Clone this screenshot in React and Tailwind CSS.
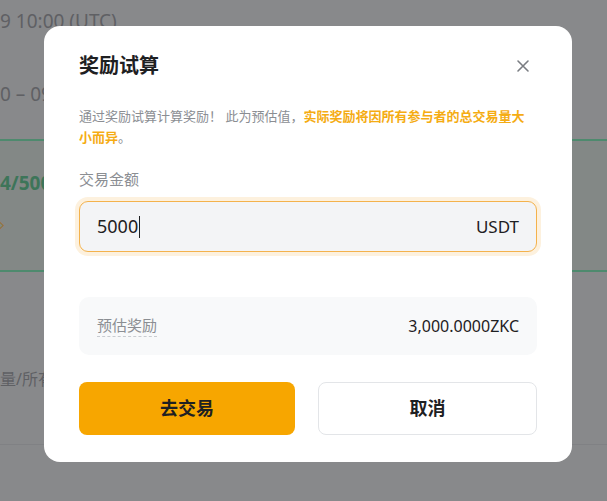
export default function App() {
  return (
    <div
      className="relative w-[607px] h-[501px] overflow-hidden bg-[#88898b]"
      style={{ fontFamily: '"Noto Sans", "Noto Sans CJK SC", sans-serif' }}
    >
      {/* dimmed page behind */}
      <div className="flex flex-col">
        <div className="h-[40px] pt-[5px] text-[19px] leading-[32px] text-[#5f6064] whitespace-nowrap">9 10:00 (UTC)</div>
        <div className="h-[99px] pt-[38px] text-[19px] leading-[32px] text-[#5f6064] whitespace-nowrap">0 – 09:00</div>
        <div className="h-[133px] border-y-2 border-[#4e8a6e] bg-[#838886] flex flex-col">
          <div className="pt-[28px] text-[19px] leading-[28px] font-bold text-[#3d7559] whitespace-nowrap">4/500</div>
          <div className="pt-[18px] text-[16px] leading-[20px] text-[#9a6f2e] -ml-[8px] whitespace-nowrap">⟐</div>
        </div>
        <div className="h-[172px] pt-[94px] text-[16px] leading-[26px] text-[#5f6064] whitespace-nowrap">量/所有参与者</div>
        <div className="border-t border-[#808184] flex-1 h-[58px] bg-[#87888a]" />
      </div>

      {/* modal */}
      <div className="absolute left-[44px] top-[26px] w-[528px] h-[436px] bg-white rounded-[16px] px-[35px] pt-[26px] flex flex-col">
        <div className="flex items-center justify-between h-[28px]">
          <div className="text-[20px] leading-[28px] font-bold text-[#1e2022]">奖励试算</div>
          <svg width="14" height="14" viewBox="0 0 14 14" className="mr-[7px]" fill="none" stroke="#7a7d82" strokeWidth="1.6" strokeLinecap="round">
            <path d="M2 2L12 12M12 2L2 12" />
          </svg>
        </div>
        <p className="mt-[26px] text-[13px] leading-[21px] text-[#8b8e93]">
          通过奖励试算计算奖励！ 此为预估值，<span className="font-bold text-[#f5ac13]">实际奖励将因所有参与者的总交易量大小而异</span>。
        </p>
        <div className="mt-[20px] text-[15px] leading-[22px] text-[#8b8e93]">交易金额</div>
        <div className="mt-[11px] rounded-[9px] ring-4 ring-[#fdf1de] border border-[#f4b24c] bg-[#f3f4f6] h-[51px] flex items-center justify-between px-[17px]">
          <div className="flex items-center text-[18px] text-[#1e2022]">
            5000<span className="inline-block w-px h-[22px] bg-[#1e2022] ml-[1px]" />
          </div>
          <div className="text-[17px] text-[#1e2022]">USDT</div>
        </div>
        <div className="mt-[45px] h-[58px] rounded-[10px] bg-[#f8f9fa] flex items-center justify-between px-[18px]">
          <span className="text-[15px] leading-[21px] text-[#8b8e93] border-b border-dashed border-[#c9ccd1]">预估奖励</span>
          <span className="text-[16px] text-[#1e2022]">3,000.0000ZKC</span>
        </div>
        <div className="mt-[27px] flex gap-[23px]">
          <div className="w-[216px] h-[53px] rounded-[8px] bg-[#f7a600] flex items-center justify-center text-[18px] font-bold text-[#1e2022]">去交易</div>
          <div className="flex-1 h-[53px] rounded-[8px] border border-[#e3e5e8] bg-white flex items-center justify-center text-[18px] font-bold text-[#1e2022]">取消</div>
        </div>
      </div>
    </div>
  );
}
